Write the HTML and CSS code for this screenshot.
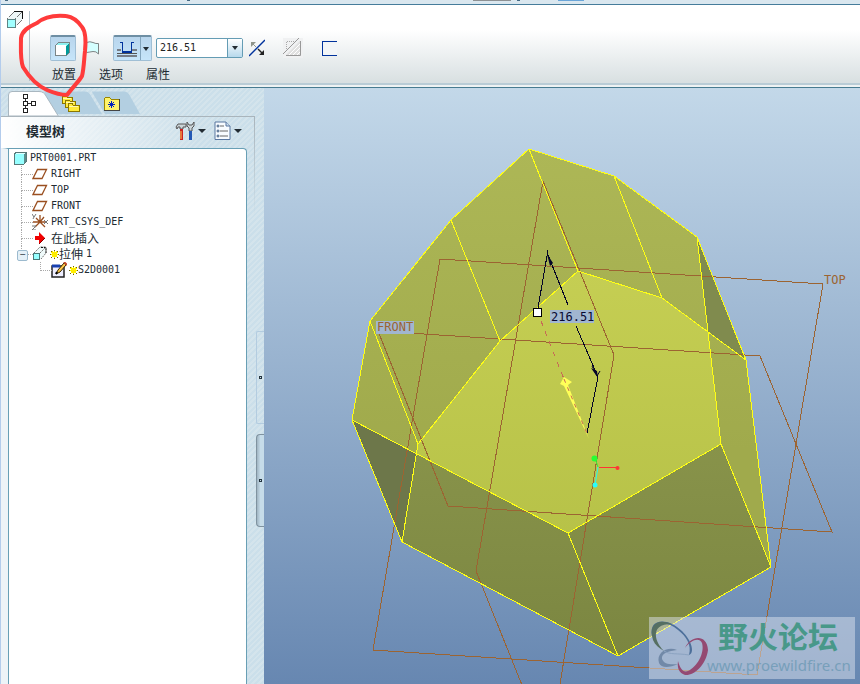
FILE: index.html
```html
<!DOCTYPE html>
<html lang="zh-CN">
<head>
<meta charset="utf-8">
<meta name="viewport" content="width=device-width, initial-scale=1">
<title>PRT0001</title>
<link rel="stylesheet" href="styles.css">
</head>
<body>
<div class="app">
  <div class="strip"><i></i><i></i><i></i><b></b><i></i><em></em></div>
  <header class="ribbon">
    <div class="feature">
      <svg width="18" height="18" viewBox="0 0 18 18" shape-rendering="crispEdges"><path d="M1 8L7 1H16V9L9 16" fill="#eef6f7"/><path d="M1 8L8 1M9 8L16 1M9 16L16 9" stroke="#777" stroke-dasharray="2 1" fill="none"/><path d="M8 .5H16.500V8" stroke="#111" fill="none"/><rect x="1" y="8" width="8" height="8" fill="#a0ffff" stroke="#5d8585"/></svg>
    </div>
    <div class="dash">
      <div class="tools">
        <button class="tool active" aria-label="实体"><svg width="18" height="16" viewBox="0 0 18 16" shape-rendering="crispEdges"><path d="M1.500 4.500L4.500 1.500H15.500V11.500L12.500 14.500H1.500Z" fill="#009a9a"/><path d="M1.500 4.500L4.500 1.500H15.500L12.500 4.500Z" fill="#8ff0f0"/><rect x="1" y="4" width="11" height="11" fill="#fff"/><path d="M1.500 14.500V4.500L4.500 1.500H15.500V11.500L12.500 14.500Z" fill="none" stroke="#7b8587"/></svg></button>
        <button class="plain surface" aria-label="曲面"><svg width="14" height="14" viewBox="0 0 14 14"><path d="M.5 1.500Q4 0 7 1.500T12.500 2.500V13Q10 10 7 10.500T.5 11.500Z" fill="#d4ffff"/><path d="M.5 1.500Q4 0 7 1.500T12.500 2.500V13Q10 10 7 10.500T.5 11.500" fill="none" stroke="#7d8484"/></svg></button>
        <button class="tool depth" aria-label="深度"><svg width="26" height="22" viewBox="0 0 26 22" shape-rendering="crispEdges"><path d="M3 12H7M18 12H23M3 18H23" stroke="#767d86" stroke-width="2"/><path d="M3 15.500H23" stroke="#555"/><path d="M8 14H18" stroke="#00329c" stroke-width="2"/><path d="M6 4.500H8.500V14M19.500 4.500H17.500V14" stroke="#00329c" fill="none"/></svg><span class="arrow"></span></button>
        <div class="combo"><input aria-label="深度值" value="216.51"><button aria-label="展开"><span class="tri"></span></button></div>
        <button class="plain flip" aria-label="反向"><svg width="16" height="18" viewBox="0 0 16 18"><path d="M0 17L16 1" stroke="#00329c" stroke-width="1.500"/><path d="M2 3H7L2 8Z" fill="#90958a"/><path d="M4 5L7 8" stroke="#90958a"/><path d="M15 16H10L15 11Z" fill="#222"/><path d="M9 10L13 14" stroke="#222" stroke-width="1.500"/></svg></button>
        <button class="plain cut" aria-label="移除材料"><svg width="20" height="20" viewBox="0 0 20 20"><rect width="20" height="20" fill="#f0f1f2"/><path d="M3 17L17 3V17Z" fill="#e0e0e0"/><path d="M6 17L17 6M10 17L17 10M14 17L17 14" stroke="#fff"/><path d="M3.500 13V3.500H13" stroke="#aaa" stroke-dasharray="1 1" fill="none"/><path d="M0 16L16 0M17.500 3V17.500H3" stroke="#999" fill="none"/></svg></button>
        <button class="plain thick" aria-label="加厚"><svg width="16" height="16" viewBox="0 0 16 16" shape-rendering="crispEdges"><rect width="16" height="16" fill="#f2f5f7"/><path d="M16 1H1V15H16" fill="none" stroke="#00329c"/></svg></button>
      </div>
      <nav class="slides"><a href="#place">放置</a><a href="#options">选项</a><a href="#props">属性</a></nav>
    </div>
  </header>

  <main class="work">
    <aside class="side">
      <div class="tabs">
        <svg class="tabart" width="132" height="27" viewBox="0 0 132 27"><path d="M36 2.500H77Q81 2.500 83 7L94 25H49L38 7Z" fill="#b3cfe1"/><path d="M84 2.500H116Q120 2.500 122 7L132 25H97L84 3Z" fill="#b3cfe1"/><path d="M.5 27V6Q.5 2.500 4 2.500H31Q36 2.500 38 7L50 26.500V27Z" fill="#fff" stroke="#a9b7c0"/></svg>
        <button class="tab" aria-label="模型树"><svg width="14" height="20" viewBox="0 0 14 20" shape-rendering="crispEdges"><path d="M3 5V15M5 10H9" stroke="#333"/><path d="M1 1H5V5H1ZM1 8H5V12H1ZM1 15H5V19H1ZM9 8H13V12H9Z" fill="#fff" stroke="#222"/></svg></button>
        <button class="tab" aria-label="文件夹浏览器"><svg width="19" height="17" viewBox="0 0 19 17" shape-rendering="crispEdges"><g fill="#ffeb3a" stroke="#8a7600"><path d="M1 8V1H5L6 2H11V8Z"/><path d="M4 12V5H8L9 6H14V12Z"/><path d="M7 16V8H11L12 10H18V16Z"/></g><path d="M8 11H17M2 3H10M5 7H13" stroke="#fff8b0"/></svg></button>
        <button class="tab" aria-label="收藏夹"><svg width="17" height="15" viewBox="0 0 17 15" shape-rendering="crispEdges"><path d="M1 14V3L3 1H6L8 3H16V14Z" fill="#fff36a" stroke="#9a8500"/><path d="M1 14H16V3" fill="none" stroke="#444"/><path d="M8.500 5V12M5 8.500H12M6 6L11 11M11 6L6 11" stroke="#0020c0"/></svg></button>
      </div>
      <section class="panel">
        <div class="head">
          <h1>模型树</h1>
          <button class="menu" aria-label="设置"><svg width="20" height="20" viewBox="0 0 20 20"><path d="M1 6L3 3H11V6H8V8H5V6H3L2 8Z" fill="#cbd4d8" stroke="#555"/><path d="M6.500 8V19" stroke="#c22" stroke-width="3"/><path d="M6 10V18" stroke="#ffcf58"/><path d="M12 1L12 5L14 7V10H17V7L19 5V1L17 4H14Z" fill="#cbd4d8" stroke="#555"/><path d="M15.500 10V19" stroke="#2459b5" stroke-width="3"/></svg><span class="tri"></span></button>
          <button class="menu" aria-label="显示"><svg width="17" height="20" viewBox="0 0 17 20"><path d="M1 1H12L16 5V18.500H1Z" fill="#f7fbff" stroke="#5876a0"/><path d="M12 1V5H16" fill="#cde" stroke="#5876a0"/><path d="M6 5H10M6 10H14M6 15H14" stroke="#666"/><g fill="#fff" stroke="#35557c"><circle cx="4" cy="5" r="1"/><circle cx="4" cy="10" r="1"/><circle cx="4" cy="15" r="1"/></g></svg><span class="tri"></span></button>
        </div>
        <div class="treebox">
          <ul class="tree">
            <li><div class="row"><svg width="14" height="14" viewBox="0 0 14 14" shape-rendering="crispEdges"><path d="M1 3L3 1H13V11L11 13H1Z" fill="#5a8c8c"/><path d="M2 3L4 2H12L11 3Z" fill="#dff"/><rect x="1" y="3" width="10" height="10" fill="#96ffff"/><path d="M1 13V3L3 1H13V11L11 13Z" fill="none" stroke="#597878"/></svg>PRT0001.PRT</div>
              <ul>
                <li><div class="row"><svg width="16" height="12" viewBox="0 0 16 12"><path d="M5.500 1.500H14.500L10 10.500H1Z" fill="none" stroke="#9a4f20" stroke-width="1.300"/></svg>RIGHT</div></li>
                <li><div class="row"><svg width="16" height="12" viewBox="0 0 16 12"><path d="M5.500 1.500H14.500L10 10.500H1Z" fill="none" stroke="#9a4f20" stroke-width="1.300"/></svg>TOP</div></li>
                <li><div class="row"><svg width="16" height="12" viewBox="0 0 16 12"><path d="M5.500 1.500H14.500L10 10.500H1Z" fill="none" stroke="#9a4f20" stroke-width="1.300"/></svg>FRONT</div></li>
                <li><div class="row"><svg width="16" height="16" viewBox="0 0 16 16"><path d="M8 1V8M1 8H13M8 8L3 13M8 8L13 13M8 8L4 4M8 8L12 3" stroke="#9a4f20" stroke-width="1.300"/><path d="M0 0L2 3L4 0M2 3L1 5M0 12H4L0 16H4M12 6L16 10M16 6L12 10" stroke="#777" fill="none"/></svg>PRT_CSYS_DEF</div></li>
                <li class="han"><div class="row"><svg width="16" height="12" viewBox="0 0 16 12"><path d="M3 4H7V0L13 6L7 12V8H3Z" fill="#f00000"/><path d="M7 12L13 6" stroke="#800"/></svg>在此插入</div></li>
                <li class="han open"><div class="row"><svg width="16" height="16" viewBox="0 0 16 16"><path d="M2 7L8 1H14V7L9 13" fill="#effafa" stroke="#777" stroke-dasharray="2 1"/><path d="M9 1.500H14V7" stroke="#111" fill="none" stroke-dasharray="2 1"/><path d="M8 7L14 1" stroke="#777" stroke-dasharray="2 1"/><rect x="1.500" y="7.500" width="6" height="6" fill="#96ffff" stroke="#487878"/></svg><svg class="star" width="9" height="9" viewBox="0 0 9 9" shape-rendering="crispEdges"><path d="M4.500 0V9M0 4.500H9M1 1L8 8M8 1L1 8" stroke="#6b6000"/><path d="M4.500 1V8M1 4.500H8M2 2L7 7M7 2L2 7" stroke="#ffee00" stroke-width="1.500"/></svg>拉伸 <span class="num">1</span></div>
                  <ul>
                    <li><div class="row"><svg width="16" height="16" viewBox="0 0 16 16"><rect x="1" y="4" width="12" height="11" fill="#eef" stroke="#222" stroke-width="1.500"/><path d="M1 4H9" stroke="#1840b0" stroke-width="3"/><path d="M5 12L7 8L13 1L15 3L9 10Z" fill="#ffc84a" stroke="#332600"/><path d="M13 0L16 3" stroke="#c34b2a" stroke-width="2"/><path d="M5 12L6 10" stroke="#000" stroke-width="2"/></svg><svg class="star" width="9" height="9" viewBox="0 0 9 9" shape-rendering="crispEdges"><path d="M4.500 0V9M0 4.500H9M1 1L8 8M8 1L1 8" stroke="#6b6000"/><path d="M4.500 1V8M1 4.500H8M2 2L7 7M7 2L2 7" stroke="#ffee00" stroke-width="1.500"/></svg>S2D0001</div></li>
                  </ul>
                </li>
              </ul>
            </li>
          </ul>
        </div>
      </section>
      <div class="sashes">
        <button class="sash" aria-label="浏览器"><span></span></button>
        <button class="sash deep" aria-label="导航器"><span></span></button>
      </div>
    </aside>

    <section class="viewport">
      <svg class="scene" viewBox="264 88 596 596" preserveAspectRatio="xMinYMin meet">
        <defs>
          <linearGradient id="up" gradientUnits="userSpaceOnUse" x1="0" y1="149" x2="0" y2="450"><stop offset="0" stop-color="#adb756"/><stop offset="1" stop-color="#a0aa4c"/></linearGradient>
          <linearGradient id="cap" gradientUnits="userSpaceOnUse" x1="0" y1="271" x2="0" y2="533"><stop offset="0" stop-color="#c5ce53"/><stop offset="1" stop-color="#b7c248"/></linearGradient>
          <linearGradient id="low" gradientUnits="userSpaceOnUse" x1="0" y1="444" x2="0" y2="656"><stop offset="0" stop-color="#88934a"/><stop offset="1" stop-color="#7b8641"/></linearGradient>
        </defs>
        <g shape-rendering="crispEdges">
          <path d="M529 149L614 176L697 237L746 360L771 567L721 444L417 454L352 420L370 321L451 220Z" fill="url(#up)"/>
          <path d="M697 237L746 360L708 332Z" fill="#808b4e"/>
          <path d="M352 420L417 454L402 542Z" fill="#6d774a"/>
          <path d="M417 454L568 533L721 444L771 567L618 656L402 542Z" fill="url(#low)"/>
          <path d="M578 271L662 298L708 332L721 444L568 533L417 454L418 444L500 341Z" fill="url(#cap)"/>
          <g fill="none" stroke="#9c6432">
            <path d="M440 259L823 284L757 675L373 650Z"/>
            <path d="M378 331L760 356L832 532L448 506Z"/>
            <path d="M559 690L614 355L543 181L476 571L524 690"/>
          </g>
          <g fill="none" stroke="#ffff14">
            <path d="M529 149L614 176L697 237L746 360L771 567L618 656L402 542L352 420L370 321L451 220Z"/>
            <path d="M529 149L578 271L662 298L746 360M614 176L662 298M697 237L721 444L771 567M721 444L568 533L618 656M568 533L352 420M370 321L418 444L402 542M418 444L500 341L578 271M451 220L500 341"/>
          </g>
          <path d="M541 321L564 379" stroke="#c76b55" stroke-dasharray="5 6" fill="none"/>
          <path d="M538 308L548 250M548 255L568 305M576 326L598 377L587 433" stroke="#050528" fill="none"/>
        </g>
        <path d="M547 254L553 263L550 266ZM598 378L591 368L597 371Z" fill="#050528"/>
        <path d="M592 366L597 376L600 371" fill="none" stroke="#050528"/>
        <path d="M564 377L572 382L568 385L589 439L564 386L560 384Z" fill="#ffff58"/>
        <path d="M564 379L588 436" stroke="#c76b55" stroke-dasharray="4 5"/>
        <rect x="533.500" y="308.500" width="8" height="8" fill="#fff" stroke="#000"/>
        <path d="M596 461L598 467" stroke="#38ef38"/><path d="M598 467L595 485" stroke="#28f5f5"/><path d="M599 467.500H618" stroke="#f33"/>
        <circle cx="594.500" cy="458.500" r="3" fill="#26ff32"/><circle cx="595" cy="485" r="2.500" fill="#28ffff"/><circle cx="617.500" cy="468" r="2" fill="#ff3636"/>
        <rect x="376" y="321" width="38" height="13" fill="#a1b6d0"/>
        <rect x="550" y="310" width="44" height="13" fill="#a1b6d0"/>
        <text class="tag plane" x="377" y="331">FRONT</text>
        <text class="tag plane" x="824" y="284">TOP</text>
        <text class="tag" x="551" y="321">216.51</text>
        <g>
          <rect x="649" y="617" width="206" height="62" fill="#dbe1ed" opacity=".5"/>
          <g fill-rule="evenodd">
            <path d="M652 636C648 618 668 617 682 631C692 641 695 653 689 655C692 645 686 636 678 630C667 621 657 622 654 630Z" fill="#4c6f9a"/>
            <path d="M653 640C648 624 658 618 672 624C660 624 655 628 656 637C657 643 661 648 664 651C659 648 655 645 653 640Z" fill="#566f62"/>
            <path d="M677 650C667 646 656 653 659 663C661 668 669 668 678 664C670 665 664 664 662 659C661 653 669 651 677 650Z" fill="#7189a8"/>
            <path d="M664 651C670 655 677 653 689 655" fill="none" stroke="#8ba3c1"/>
            <path d="M685 648C691 635 707 634 708 650C706 665 694 676 685 675C679 673 677 668 678 661C680 668 683 673 688 671C697 667 705 653 702 643C699 637 691 640 685 648Z" fill="#944a72"/>
          </g>
          <text class="forum" x="718" y="648">野火论坛</text>
          <text class="site" x="707" y="671">www.proewildfire.cn</text>
        </g>
      </svg>
    </section>
  </main>
  <svg class="ring" width="72" height="86" viewBox="17 12 72 86" aria-hidden="true"><path d="M66 16C55 15 44 17 37 23C28 27 22 31 21 38C21 49 20 59 23 67C29 77 36 85 47 90C54 93 61 95 67 95C73 87 80 80 82 76C84 68 84 59 85 51C86 41 86 32 82 27C78 21 73 17 66 16" fill="none" stroke="#ff3b3b" stroke-width="4" stroke-linejoin="round"/></svg>
</div>
</body>
</html>
```
FILE: styles.css
```css
* { box-sizing: border-box; }
body {
  margin: 0;
  font: 12px/16px "Noto Sans CJK SC", sans-serif;
  color: #222c33;
}
button { border: 0; padding: 0; background: none; color: inherit; font: inherit; }
svg { display: block; flex: none; }
h1, ul { margin: 0; padding: 0; }
.app {
  position: relative;
  display: flex;
  flex-direction: column;
  min-height: 100vh;
  border-left: 1px solid #b3ccec;
}

.strip {
  display: flex;
  height: 5px;
  padding-left: 4px;
  background: #dae7ef;
  border-bottom: 1px solid #467c9b;
}
.strip i { width: 3px; height: 1px; margin-right: 179px; background: #456a84; }
.strip i + i { margin-right: 100px; }
.strip i + i + i { margin-right: 180px; background: none; }
.strip b { width: 38px; height: 1px; background: #8c9093; }
.strip b + i { margin: 0 38px 0 6px; }
.strip em { width: 26px; height: 1px; background: #6aa5d8; }

.ribbon {
  display: flex;
  height: 83px;
  background: linear-gradient(#fff 0 30%, #d5dddf 100%);
  border-bottom: 1px solid #477b91;
  box-shadow: inset 0 -2px #eef2f3, inset 0 -4px #b9ccd6;
}
.feature { width: 29px; height: 70px; margin-top: 6px; padding: 0 5px; border-right: 1px solid #b4c1c9; }
.dash { padding: 30px 0 0 20px; }
.tools { display: flex; align-items: center; height: 26px; }
.tool {
  display: flex;
  align-items: center;
  justify-content: center;
  width: 26px;
  height: 26px;
  background: linear-gradient(#b8d5ec, #c6e5fa);
  border: 1px solid #a0bfd5;
  border-top: 2px solid #6d8ea3;
  border-radius: 2px;
}
.surface { margin: 0 13px 0 10px; }
.tool.depth { width: 39px; }
.arrow {
  display: flex;
  align-items: center;
  justify-content: center;
  width: 12px;
  height: 23px;
  border-left: 1px solid #83a5bd;
}
.arrow::after, .tri {
  content: "";
  border: 3px solid transparent;
  border-top: 4px solid #222c33;
  border-bottom: 0;
}
.combo {
  display: flex;
  width: 87px;
  height: 20px;
  margin: 0 6px 0 4px;
  background: #fff;
  border: 1px solid #649cb4;
  border-radius: 2px;
}
.combo input {
  flex: 1;
  min-width: 0;
  padding: 0 3px;
  border: 0;
  background: none;
  color: #222;
  font: 10px/16px "DejaVu Sans Mono", monospace;
}
.combo button {
  display: flex;
  align-items: center;
  justify-content: center;
  width: 15px;
  border-left: 1px solid #649cb4;
  background: linear-gradient(#fff, #b7d9ec);
}
.cut { margin: 0 18px; }
.slides { display: flex; gap: 23px; padding: 5px 0 0 2px; }
.slides a { color: inherit; text-decoration: none; }

.work { display: flex; flex: 1; }
.side {
  display: grid;
  grid-template: 28px 1fr / 254px 9px;
  background: repeating-linear-gradient(135deg, #cbdfea 0 2px, #d4e4ec 2px 4px);
}
.tabs { position: relative; display: flex; align-items: center; grid-column: 1 / 3; padding: 2px 0 0 13px; }
.tabart { position: absolute; left: 7px; bottom: 0; }
.tab { position: relative; display: flex; justify-content: center; width: 30px; }
.tab + .tab { margin-left: 11px; }
.panel {
  display: flex;
  flex-direction: column;
  padding-right: 7px;
  border: solid #a9b4bb;
  border-width: 1px 1px 0 0;
  border-image: linear-gradient(#a9b4bb, transparent 100px) 1;
}
.head {
  display: flex;
  align-items: center;
  height: 31px;
  padding: 0 5px 4px 25px;
  background: linear-gradient(90deg, #fff, #fff0 80%);
}
h1 { flex: 1; font-size: 13px; line-height: 16px; }
.menu { display: flex; align-items: center; gap: 3px; margin-left: 8px; }
.menu .tri { border-width: 4px 4px 0; }
.treebox {
  flex: 1;
  padding: 1px 5px;
  background: #fff;
  border: 1px solid #689fb5;
  border-bottom: 0;
  border-left: 7px solid #edf3f7;
  border-radius: 0 4px 0 0;
  box-shadow: inset 1px 0 #689fb5;
}
ul { list-style: none; }
.row {
  display: flex;
  align-items: center;
  gap: 3px;
  height: 16px;
  white-space: nowrap;
  font: 10px/16px "DejaVu Sans Mono", monospace;
}
.tree li ul li { position: relative; padding-left: 19px; }
.tree li ul li::before {
  content: "";
  position: absolute;
  left: 8px;
  top: 0;
  width: 11px;
  height: 8px;
  border: dotted #aaa;
  border-width: 0 0 1px 1px;
}
.tree li ul li:not(:last-child)::after {
  content: "";
  position: absolute;
  left: 8px;
  top: 8px;
  height: 8px;
  border-left: 1px dotted #aaa;
}
.row .star { margin: 0 -3px 0 -1px; }
.tree .open > .row::before {
  content: "−";
  position: absolute;
  z-index: 1;
  left: 4px;
  top: 4px;
  width: 9px;
  height: 9px;
  border: 1px solid #9cbace;
  border-radius: 2px;
  background: #e4f0f8;
  text-align: center;
  font: 8px/7px "DejaVu Sans", sans-serif;
}
.han > .row { font: 12px/16px "Noto Sans CJK SC", sans-serif; }
.num { font: 10px/16px "DejaVu Sans Mono", monospace; }
.sashes { padding: 215px 0 0 1px; }
.sash {
  display: flex;
  align-items: center;
  width: 8px;
  height: 93px;
  margin-bottom: 10px;
  padding-left: 2px;
  border: 1px solid #b3cce0;
  border-right: 0;
  border-radius: 2px 0 0 2px;
}
.sash span { width: 3px; height: 3px; border: 1px solid #24343f; }
.deep { border: 1px solid #7f929f; border-right: 0; border-radius: 4px 0 0 4px; background: linear-gradient(90deg, #a0b4c2, #c6dce9 50%); }

.viewport { flex: 1; min-width: 0; background: linear-gradient(#c3d8e9, #6787b1); }
.scene { width: 100%; }
.tag { font: 12px "DejaVu Sans Mono", monospace; fill: #080830; }
.plane { fill: #9c6432; }
.forum { font: bold 30px "Noto Sans CJK SC", sans-serif; fill: #489889; }
.site { font: 15px "Noto Sans", sans-serif; fill: #779fba; }
.ring { position: absolute; left: 16px; top: 12px; pointer-events: none; }
```
